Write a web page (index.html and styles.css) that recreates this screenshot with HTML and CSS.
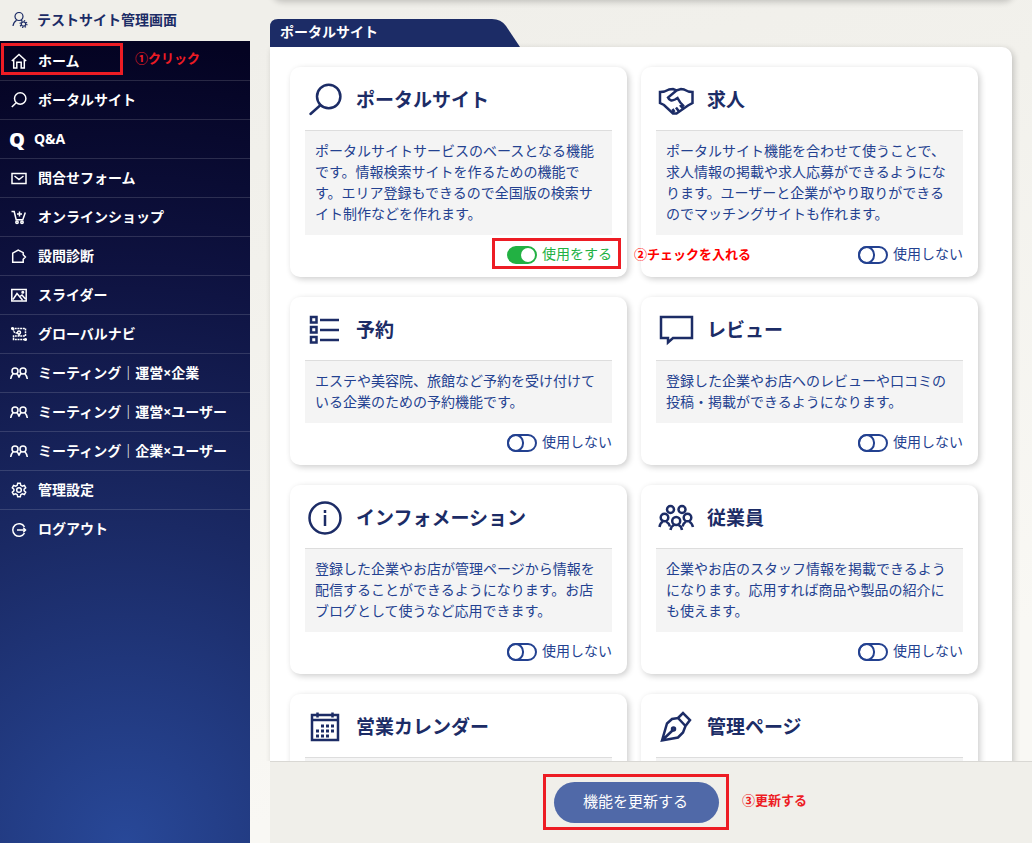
FILE: index.html
```html
<!DOCTYPE html>
<html lang="ja">
<head>
<meta charset="utf-8">
<meta name="viewport" content="width=device-width, initial-scale=1">
<title>テストサイト管理画面</title>
<link rel="stylesheet" href="styles.css">
</head>
<body>
<div class="layout">
  <aside class="side">
    <header class="brand">
      <svg class="icon" viewBox="0 0 16 16"><circle cx="7" cy="4.500" r="4"/><path d="M4.600 8.200C2.600 9.500 1.200 11 1 14M8.800 8.300l1 .6"/><circle cx="11.500" cy="12" r="2.200"/><circle cx="11.500" cy="12" r="3.400" stroke-dasharray="1.300 1.370"/></svg>
      <span>テストサイト管理画面</span>
    </header>
    <nav class="nav">
      <a class="nav-item" href="#home">
        <svg class="icon" viewBox="0 0 16 16"><path d="M.8 8 8 1.500 15.200 8M2.700 6.800V15h3.100V9.200h4.400V15h3.100V6.800"/></svg>
        <span class="nav-text">ホーム</span>
        <span class="mark mark-home"></span>
        <span class="note note-home">①クリック</span>
      </a>
      <a class="nav-item" href="#portal">
        <svg class="icon" viewBox="0 0 16 16"><circle cx="9.200" cy="6.500" r="5.700"/><path d="M5.200 10.700.8 15"/></svg>
        <span class="nav-text">ポータルサイト</span>
      </a>
      <a class="nav-item nav-qa" href="#qa"><b class="q">Q</b><span class="nav-text">Q&amp;A</span></a>
      <a class="nav-item" href="#contact">
        <svg class="icon" viewBox="0 0 16 16"><path d="M1 3.500h14v10H1zM3.500 6 8 9.500 12.500 6"/></svg>
        <span class="nav-text">問合せフォーム</span>
      </a>
      <a class="nav-item" href="#shop">
        <svg class="icon" viewBox="0 0 16 16"><path d="M.5 2.500h2.700l2 8.300h6.600l2.500-7.300M8.500 2.500v5M6 5h5"/><circle cx="6" cy="13.200" r="1.200"/><circle cx="11" cy="13.200" r="1.200"/></svg>
        <span class="nav-text">オンラインショップ</span>
      </a>
      <a class="nav-item" href="#diagnosis">
        <svg class="icon" viewBox="0 0 16 16"><path d="M1.700 14.300V5.200L7.200 2l5 2.600v2.200l2.200 2.200-2.200 2.200v3.100z"/></svg>
        <span class="nav-text">設問診断</span>
      </a>
      <a class="nav-item" href="#slider">
        <svg class="icon" viewBox="0 0 16 16"><path d="M.8 2.500h14.400v11.500H.8zM2 12.500 6 6.500l5.500 6.500M9 9.500l2-1.500 3.500 4"/><circle cx="11.800" cy="5.300" r=".8"/></svg>
        <span class="nav-text">スライダー</span>
      </a>
      <a class="nav-item" href="#global">
        <svg class="icon" viewBox="0 0 16 16"><g stroke-dasharray="2 .7"><path d="M1 2.500h13.500v7.500H2.500v3.500H14M2.500 2.500v1.500q0 3 3.500 3"/></g><circle cx="8" cy="6.500" r="1.500"/><path d="M8 8v2"/><circle cx="1.500" cy="2.500" r=".8"/><circle cx="14.500" cy="13.500" r=".8"/></svg>
        <span class="nav-text">グローバルナビ</span>
      </a>
      <a class="nav-item" href="#meeting1">
        <svg class="icon wide" viewBox="0 0 18 16"><circle cx="5" cy="6" r="3"/><circle cx="13" cy="6" r="3"/><path d="M.7 14C1 11.500 2 10 3.300 8.600M6.700 8.600Q8.500 10 9 12.500 9.500 10 11.300 8.600M14.700 8.600C16 10 17 11.500 17.300 14"/></svg>
        <span class="nav-text">ミーティング｜運営×企業</span>
      </a>
      <a class="nav-item" href="#meeting2">
        <svg class="icon wide" viewBox="0 0 18 16"><circle cx="5" cy="6" r="3"/><circle cx="13" cy="6" r="3"/><path d="M.7 14C1 11.500 2 10 3.300 8.600M6.700 8.600Q8.500 10 9 12.500 9.500 10 11.300 8.600M14.700 8.600C16 10 17 11.500 17.300 14"/></svg>
        <span class="nav-text">ミーティング｜運営×ユーザー</span>
      </a>
      <a class="nav-item" href="#meeting3">
        <svg class="icon wide" viewBox="0 0 18 16"><circle cx="5" cy="6" r="3"/><circle cx="13" cy="6" r="3"/><path d="M.7 14C1 11.500 2 10 3.300 8.600M6.700 8.600Q8.500 10 9 12.500 9.500 10 11.300 8.600M14.700 8.600C16 10 17 11.500 17.300 14"/></svg>
        <span class="nav-text">ミーティング｜企業×ユーザー</span>
      </a>
      <a class="nav-item" href="#settings">
        <svg class="icon" viewBox="0 0 16 16"><path d="M6.700 1.200h2.600l.5 2.100 1.500.9 2.100-.7 1.300 2.300-1.600 1.500v1.400l1.600 1.500-1.300 2.300-2.100-.7-1.500.9-.5 2.100H6.700l-.5-2.100-1.500-.9-2.100.7-1.300-2.300 1.600-1.500V7.300L1.300 5.800l1.300-2.300 2.100.7 1.500-.9z"/><circle cx="8" cy="8" r="2.300"/></svg>
        <span class="nav-text">管理設定</span>
      </a>
      <a class="nav-item" href="#logout">
        <svg class="icon" viewBox="0 0 16 16"><path d="M13.500 4.800a6.300 6.300 0 1 0 0 6.400M6 8h8.500M12.300 5.800 14.500 8l-2.200 2.200"/></svg>
        <span class="nav-text">ログアウト</span>
      </a>
    </nav>
  </aside>

  <div class="content">
    <main class="scroll">
      <div class="prev-panel"></div>
      <section class="section">
        <h2 class="tab">
          <svg class="tab-shape" viewBox="0 0 250 28" preserveAspectRatio="none"><path d="M0 28V8Q0 0 8 0H222Q231 0 236 7L250 28Z"/></svg>
          <span>ポータルサイト</span>
        </h2>
        <div class="panel">
          <article class="card">
            <h3 class="card-head">
              <svg class="card-icon" viewBox="0 0 40 40"><circle cx="23.700" cy="16.500" r="11.700"/><path d="M15.300 25.200 5.500 34" stroke-linecap="round"/></svg>
              <span>ポータルサイト</span>
            </h3>
            <p class="desc">ポータルサイトサービスのベースとなる機能です。情報検索サイトを作るための機能です。エリア登録もできるので全国版の検索サイト制作などを作れます。</p>
            <label class="switch is-on">
              <input type="checkbox" checked><span>使用をする</span>
              <span class="mark mark-switch"></span>
              <span class="note note-switch">②チェックを入れる</span>
            </label>
          </article>
          <article class="card">
            <h3 class="card-head">
              <svg class="card-icon" viewBox="0 0 40 40"><path d="M4 12Q9 12 13 9.500L17 9l3.500 1.500L25 9l3 .5Q32 12 36.500 12V23L32 25.500 20.500 33.500H17L8 25 4 23zM20.500 10.500 12 17.500Q14 22 19 19.500L21.500 18Q24 23 28 26.500M24 25l2.500 3M20 27.500l3 4M16.500 29l2 3"/></svg>
              <span>求人</span>
            </h3>
            <p class="desc">ポータルサイト機能を合わせて使うことで、求人情報の掲載や求人応募ができるようになります。ユーザーと企業がやり取りができるのでマッチングサイトも作れます。</p>
            <label class="switch"><input type="checkbox"><span>使用しない</span></label>
          </article>
          <article class="card">
            <h3 class="card-head">
              <svg class="card-icon" viewBox="0 0 40 40"><path d="M6 7h5.500v5.500H6zM6 17h5.500v5.500H6zM6 27h5.500v5.500H6zM15 10h19M15 20h19M15 30h19"/></svg>
              <span>予約</span>
            </h3>
            <p class="desc">エステや美容院、旅館など予約を受け付けている企業のための予約機能です。</p>
            <label class="switch"><input type="checkbox"><span>使用しない</span></label>
          </article>
          <article class="card">
            <h3 class="card-head">
              <svg class="card-icon" viewBox="0 0 40 40"><path d="M5 7h31v21H17l-5 4.500V28H5z"/></svg>
              <span>レビュー</span>
            </h3>
            <p class="desc">登録した企業やお店へのレビューや口コミの投稿・掲載ができるようになります。</p>
            <label class="switch"><input type="checkbox"><span>使用しない</span></label>
          </article>
          <article class="card">
            <h3 class="card-head">
              <svg class="card-icon" viewBox="0 0 40 40"><circle cx="20" cy="20" r="15.500"/><path d="M20 17v11M20 12v3"/></svg>
              <span>インフォメーション</span>
            </h3>
            <p class="desc">登録した企業やお店が管理ページから情報を配信することができるようになります。お店ブログとして使うなど応用できます。</p>
            <label class="switch"><input type="checkbox"><span>使用しない</span></label>
          </article>
          <article class="card">
            <h3 class="card-head">
              <svg class="card-icon" viewBox="0 0 40 40"><circle cx="14.500" cy="11.500" r="3.500"/><circle cx="26" cy="11.500" r="3.500"/><circle cx="8.500" cy="19.500" r="3.800"/><circle cx="31.500" cy="19.500" r="3.800"/><circle cx="20.200" cy="23" r="4"/><path d="M3.500 29Q4 25 7 23.500M10 23.500Q13 25 14 28.500M37 29Q36 25 33 23.500M30 23.500Q27.500 25 26.500 28.500M14.500 32Q15 28.500 18 27M22.500 27Q25.500 28.500 26 32"/></svg>
              <span>従業員</span>
            </h3>
            <p class="desc">企業やお店のスタッフ情報を掲載できるようになります。応用すれば商品や製品の紹介にも使えます。</p>
            <label class="switch"><input type="checkbox"><span>使用しない</span></label>
          </article>
          <article class="card">
            <h3 class="card-head">
              <svg class="card-icon" viewBox="0 0 40 40"><path d="M7 8h26v25H7zM7 13h26M12.500 5.500v5M27.500 5.500v5"/><path d="M16 19h14M11 24h19M11 29h14" stroke-width="3" stroke-dasharray="3 2"/></svg>
              <span>営業カレンダー</span>
            </h3>
            <p class="desc"></p>
          </article>
          <article class="card">
            <h3 class="card-head">
              <svg class="card-icon" viewBox="0 0 40 40"><path d="M6 33.500 11 16.500 16 12 22 11 29.500 19 27 25.500 22 30.500zM22 11 27 6 34 13 29.500 19M6 33.500 17.500 22.500"/><circle cx="17.500" cy="22" r="1.500"/></svg>
              <span>管理ページ</span>
            </h3>
            <p class="desc"></p>
          </article>
        </div>
      </section>
    </main>
    <footer class="actions">
      <div class="submit-wrap">
        <button class="submit" type="submit">機能を更新する</button>
        <span class="mark mark-submit"></span>
        <span class="note note-submit">③更新する</span>
      </div>
    </footer>
  </div>
</div>
</body>
</html>
```

FILE: styles.css
```css
*,
*::before {
  box-sizing: border-box;
}

body {
  margin: 0;
  color: #234190;
  font: 14px/21px "Noto Sans", "Noto Sans CJK JP", sans-serif;
}

h2,
h3,
p {
  margin: 0;
}

svg {
  fill: none;
  stroke: currentColor;
}

.layout {
  display: grid;
  grid-template-columns: 250px minmax(0, 1fr);
  height: 100vh;
  overflow: hidden;
  background: linear-gradient(165deg, #f0efea 10%, #f2f1ec 30%, #f9f8f4 80%);
}

/* Sidebar */
.side {
  display: flex;
  flex-direction: column;
}

.brand {
  display: flex;
  align-items: center;
  gap: 9px;
  height: 41px;
  padding: 0 12px 2px;
  background: #f0efea;
  color: #1c2c66;
  font-weight: 700;
}

.icon {
  flex: none;
  width: 16px;
  height: 16px;
  stroke-width: 1.5;
}

.icon.wide {
  width: 18px;
  margin: 0 -1px;
}

.brand .icon {
  stroke-width: 1.2;
}

.nav {
  flex: 1;
  padding-top: 1px;
  background: radial-gradient(circle 800px at 50% 100%, #284898 0%, #1a2964 40%, #0e1240 72%, #040322 100%);
}

.nav-item {
  position: relative;
  display: flex;
  align-items: center;
  gap: 11px;
  height: 39px;
  padding: 0 11px;
  border-bottom: 1px solid rgba(255, 255, 255, 0.14);
  color: #fff;
  font-weight: 700;
  text-decoration: none;
}

.nav-item:last-child {
  border-bottom: 0;
}

.nav-text {
  padding-bottom: 2px;
}

.nav-qa {
  gap: 9px;
  padding-left: 9px;
}

.q {
  font-size: 20px;
}

/* Main column */
.content {
  display: flex;
  flex-direction: column;
  min-width: 0;
  min-height: 0;
  padding-left: 20px;
}

.scroll {
  flex: 1;
  min-height: 0;
  margin-left: -20px;
  padding: 0 20px;
  overflow: hidden;
}

.prev-panel {
  height: 19px;
  margin-top: -19px;
  border-radius: 0 0 10px 10px;
  background: #fff;
  box-shadow: 2px 2px 6px rgba(0, 0, 0, 0.2);
}

.section {
  padding-top: 19px;
}

.tab {
  position: relative;
  width: 250px;
  padding: 0 10px 2px;
  color: #fff;
  font-size: 14px;
  line-height: 26px;
}

.tab span {
  position: relative;
}

.tab-shape {
  position: absolute;
  inset: 0;
  width: 100%;
  height: 100%;
  fill: #1c2c66;
  stroke: none;
}

.panel {
  display: grid;
  grid-template-columns: repeat(2, minmax(0, 1fr));
  gap: 20px 14px;
  padding: 20px 34px 20px 20px;
  border-radius: 0 10px 10px 10px;
  background: #fff;
  box-shadow: 2px 2px 6px rgba(0, 0, 0, 0.2);
}

.card {
  padding: 0 15px;
  border-radius: 10px;
  background: #fff;
  box-shadow: 2px 2px 6px rgba(0, 0, 0, 0.2);
}

.card-head {
  display: flex;
  align-items: center;
  gap: 11px;
  height: 63px;
  padding-top: 3px;
  color: #1c2c66;
  font-size: 19px;
}

.card-icon {
  flex: none;
  width: 40px;
  height: 40px;
  stroke-width: 2.5;
}

.desc {
  min-height: 63px;
  padding: 9px 10px 11px;
  border-top: 1px solid #ddd;
  background: #f4f4f4;
  line-break: strict;
}

.switch {
  position: relative;
  display: flex;
  align-items: center;
  gap: 5px;
  width: fit-content;
  height: 42px;
  margin-left: auto;
  padding-bottom: 6px;
}

.switch input {
  appearance: none;
  width: 30px;
  height: 18px;
  margin: 4px 0 0;
  border: 2px solid #234190;
  border-radius: 9px;
}

.switch input::before {
  content: "";
  display: block;
  width: 17px;
  height: 18px;
  margin: -2px;
  border: 2px solid #234190;
  border-radius: 9px;
}

.switch.is-on {
  color: #22b143;
}

.switch input:checked {
  border-color: #22b143;
  background: #22b143;
}

.switch input:checked::before {
  width: 14px;
  height: 14px;
  margin: 0 0 0 12px;
  border: 0;
  background: #fff;
}

/* Action bar */
.actions {
  display: flex;
  justify-content: center;
  padding: 20px 29px 20px 0;
  border-top: 1px solid #d9d8d4;
  background: #f0efea;
}

.submit-wrap {
  position: relative;
}

.submit {
  display: block;
  width: 165px;
  height: 41px;
  padding: 0 2px 2px 0;
  border: 0;
  border-radius: 21px;
  background: #5069a8;
  color: #fff;
  font: inherit;
  font-size: 15px;
}

/* Step callouts lying over the controls */
.mark {
  position: absolute;
  border: 3px solid #ed1c24;
  pointer-events: none;
}

.note {
  position: absolute;
  z-index: 1;
  color: #ed1c24;
  font-size: 13px;
  font-weight: 700;
  white-space: nowrap;
}

.mark-home {
  inset: 1px 127px 5px 1px;
}

.note-home {
  top: 6px;
  left: 135px;
}

.mark-switch {
  inset: 3px -9px 8px -15px;
}

.note-switch {
  top: 9px;
  left: calc(100% + 22px);
  color: #ff0000;
}

.mark-submit {
  inset: -8px -10px -7px -11px;
}

.note-submit {
  top: 8px;
  left: calc(100% + 23px);
}
```
